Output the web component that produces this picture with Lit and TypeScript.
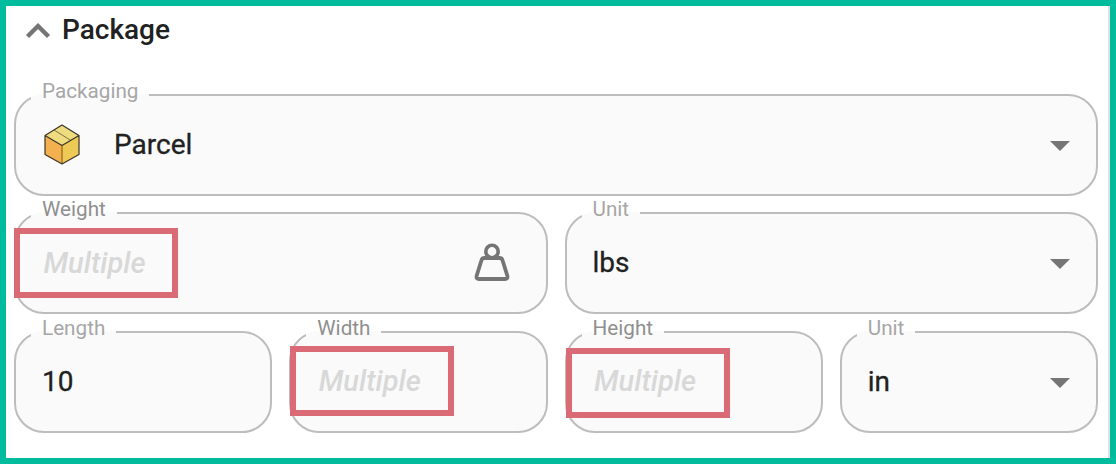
import { LitElement, html, css, nothing } from 'lit';
import { customElement } from 'lit/decorators.js';

const chevronUp = html`<svg class="chevron" width="26" height="18" viewBox="0 0 26 18">
  <path d="M2.5 15.5 L13 5 L23.5 15.5" fill="none" stroke="#757575" stroke-width="4.4" />
</svg>`;

const parcelIcon = html`<svg class="parcel" width="38" height="41" viewBox="0 0 38 41">
  <path d="M19 1 L36 11.500 V30.500 L19 40 Z" fill="#edc955" />
  <path d="M2 11.500 L19 21.500 V40 L2 30.500 Z" fill="#f2b14e" />
  <path d="M19 1 L36 11.500 L19 21.500 L2 11.500 Z" fill="#efdc80" />
  <path d="M19 21.500 V40" stroke="#b8892f" stroke-width="2" />
  <path d="M11 6 L28 16.500" stroke="#7f7440" stroke-width="1" fill="none" />
  <path d="M19 1 L36 11.500 V30.500 L19 40 L2 30.500 V11.500 Z M2 11.500 L19 21.500 L36 11.500" fill="none" stroke="#3a3528" stroke-width="1.200" stroke-linejoin="round" />
</svg>`;

const weightIcon = html`<svg class="weight" width="38" height="40" viewBox="0 0 38 40">
  <circle cx="19" cy="8.500" r="6.200" fill="none" stroke="#757575" stroke-width="3.600" />
  <path d="M11.500 15 H26.500 Q29 15 29.600 17.500 L34.400 33 Q35 36 32 36 H6 Q3 36 3.600 33 L8.400 17.500 Q9 15 11.500 15 Z" fill="none" stroke="#757575" stroke-width="3.800" />
</svg>`;

@customElement('app-root')
export class AppRoot extends LitElement {
  static styles = css`
    :host {
      display: block;
      font-family: Roboto, 'Liberation Sans', sans-serif;
    }
    .frame {
      box-sizing: border-box;
      height: 464px;
      border: 6px solid #00bc9f;
      background: #fff;
      overflow: hidden;
    }
    .inner {
      box-sizing: border-box;
      height: 100%;
      padding: 0 10px 0 8px;
      border-right: 2px solid #e0e0e0;
    }
    .header {
      display: flex;
      align-items: center;
      height: 47px;
      margin-bottom: 25.5px;
      padding-left: 11px;
      gap: 11px;
      font-size: 28px;
      font-weight: 500;
      color: #212121;
    }
    .grid {
      display: grid;
      grid-template-columns: repeat(4, 1fr);
      grid-auto-rows: 117px;
      column-gap: 17px;
      row-gap: 1.500px;
    }
    .full { grid-column: span 4; }
    .half { grid-column: span 2; }
    .field {
      position: relative;
      min-width: 0;
    }
    fieldset {
      box-sizing: border-box;
      height: 100%;
      margin: 0;
      padding: 0 26px 16px 26px;
      border: 2px solid #bdbdbd;
      border-radius: 30px;
      background: #fafafa;
      display: flex;
      align-items: center;
      min-width: 0;
    }
    legend {
      margin-left: -11px;
      padding: 0 11px 8px;
      font-size: 20.7px;
      line-height: 24px;
      color: #a6a6a6;
    }
    legend.strong { color: #8f8f8f; }
    .value {
      flex: 1;
      font-size: 28px;
      font-weight: 400;
      color: #212121;
      -webkit-text-stroke: 0.3px #212121;
    }
    .value.multiple {
      margin-left: 1.500px;
      font-size: 29px;
      font-weight: 500;
      font-style: italic;
      color: #d8d8d8;
      -webkit-text-stroke: 0;
    }
    .parcel { margin-right: 33px; margin-left: 1px; flex: none; }
    .weight { flex: none; margin-right: 9px; }
    .arrow {
      flex: none;
      width: 0;
      height: 0;
      margin-top: 3px;
      border-left: 10px solid transparent;
      border-right: 10px solid transparent;
      border-top: 10px solid #757575;
    }
    .mark {
      position: absolute;
      box-sizing: border-box;
      width: 164px;
      height: 70px;
      border: 6px solid #da6a75;
      left: 0;
      top: 31px;
    }
    .mark.width { left: 1px; top: 30px; }
    .mark.height { left: 1.500px; top: 32px; }
  `;

  private field(label: string, span: string, value: unknown) {
    return html`<div class="field ${span}">
      <fieldset><legend>${label}</legend>${value}</fieldset>
    </div>`;
  }

  private multiple(label: string, span: string, mark: string, extra: unknown = nothing) {
    return html`<div class="field ${span}">
      <fieldset>
        <legend class="strong">${label}</legend>
        <span class="value multiple">Multiple</span>
        ${extra}
      </fieldset>
      <div class="mark ${mark}"></div>
    </div>`;
  }

  private select(label: string, span: string, text: string, icon: unknown = nothing) {
    return this.field(label, span, html`${icon}<span class="value">${text}</span><span class="arrow"></span>`);
  }

  render() {
    return html`
      <div class="frame">
        <div class="inner">
          <div class="header">${chevronUp}<span>Package</span></div>
          <div class="grid">
            ${this.select('Packaging', 'full', 'Parcel', parcelIcon)}
            ${this.multiple('Weight', 'half', 'weight-mark', weightIcon)}
            ${this.select('Unit', 'half', 'lbs')}
            ${this.field('Length', '', html`<span class="value">10</span>`)}
            ${this.multiple('Width', '', 'width')}
            ${this.multiple('Height', '', 'height')}
            ${this.select('Unit', '', 'in')}
          </div>
        </div>
      </div>
    `;
  }
}
